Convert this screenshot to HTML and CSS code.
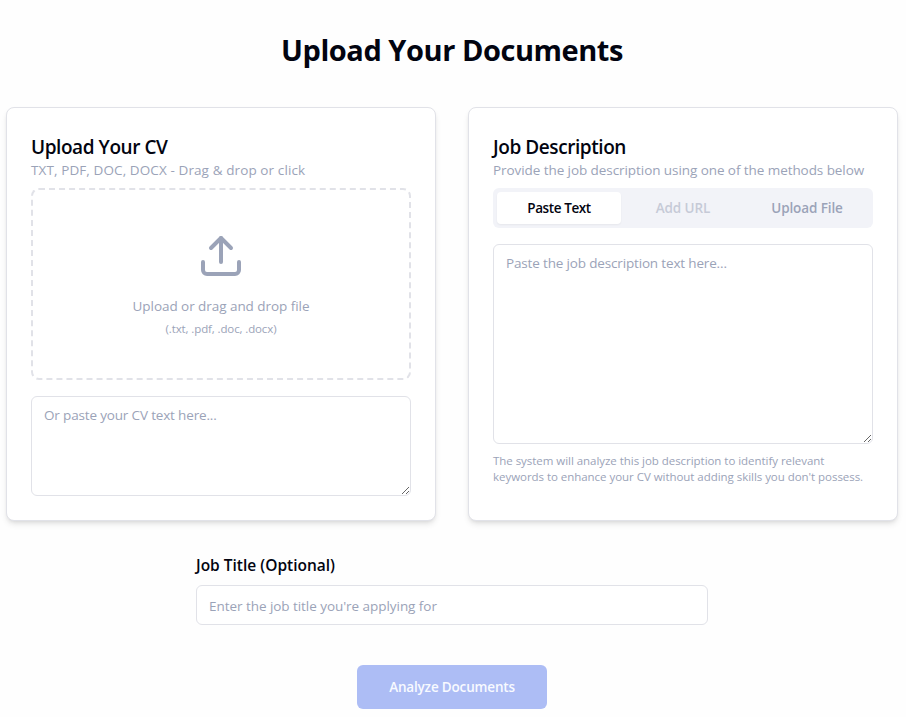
FILE: index.html
```html
<!DOCTYPE html>
<html lang="en">
<head>
<meta charset="utf-8">
<title>Upload Your Documents</title>
<link rel="stylesheet" href="styles.css">
</head>
<body>
<main class="page">
  <h1 class="page-title">Upload Your Documents</h1>
  <div class="cards">
    <section class="card">
      <h2 class="card-title">Upload Your CV</h2>
      <p class="card-note formats">TXT, PDF, DOC, DOCX - Drag &amp; drop or click</p>
      <div class="dropzone">
        <svg class="upload-icon" viewBox="0 0 24 24" fill="none" stroke="currentColor" stroke-width="2" stroke-linecap="round" stroke-linejoin="round"><path d="M21 15v4a2 2 0 0 1-2 2H5a2 2 0 0 1-2-2v-4"/><polyline points="17 8 12 3 7 8"/><line x1="12" x2="12" y1="3" y2="15"/></svg>
        <p class="drop-text">Upload or drag and drop file</p>
        <p class="drop-types">(.txt, .pdf, .doc, .docx)</p>
      </div>
      <textarea class="field area cv-area" placeholder="Or paste your CV text here..."></textarea>
    </section>
    <section class="card">
      <h2 class="card-title">Job Description</h2>
      <p class="card-note">Provide the job description using one of the methods below</p>
      <div class="tabs">
        <button class="tab active">Paste Text</button>
        <button class="tab muted">Add URL</button>
        <button class="tab">Upload File</button>
      </div>
      <textarea class="field area job-area" placeholder="Paste the job description text here..."></textarea>
      <p class="hint">The system will analyze this job description to identify relevant<br>keywords to enhance your CV without adding skills you don't possess.</p>
    </section>
  </div>
  <div class="job-title">
    <label class="label" for="job">Job Title (Optional)</label>
    <input class="field input" id="job" placeholder="Enter the job title you're applying for">
  </div>
  <button class="submit">Analyze Documents</button>
</main>
</body>
</html>
```
FILE: styles.css
```css
* { box-sizing: border-box; margin: 0; }
body {
  background: #fefefe;
  color: #020410;
  font-family: "Open Sans", "Noto Sans", sans-serif;
  font-size: 13.5px;
  line-height: 20px;
}
button, input, textarea { font: inherit; letter-spacing: inherit; }
.page { width: 892px; margin-left: 6px; padding-top: 32px; display: flex; flex-direction: column; align-items: center; }
.page-title { font-size: 29px; line-height: 36px; font-weight: 700; letter-spacing: -.45px; white-space: nowrap; }
.cards { width: 100%; margin-top: 39px; display: grid; grid-template-columns: 1fr 1fr; gap: 32px; }
.card {
  height: 414px;
  padding: 24px;
  background: #fff;
  border: 1px solid #e1e2e8;
  border-radius: 8px;
  box-shadow: 0 4px 6px -1px rgba(0,0,0,.1), 0 2px 4px -2px rgba(0,0,0,.1);
}
.card-title { padding-top: 2px; font-size: 19px; line-height: 26px; font-weight: 600; letter-spacing: -.43px; }
.card-note { color: #9ba3b8; line-height: 20px; margin-bottom: 8px; letter-spacing: -.07px; white-space: nowrap; }
.formats { letter-spacing: .1px; }
.dropzone {
  height: 192px;
  border: 2px dashed #e1e2e8;
  border-radius: 8px;
  display: flex; flex-direction: column; align-items: center;
  padding-top: 42px;
  color: #9ba3b8;
}
.upload-icon { width: 48px; height: 48px; }
.drop-text { margin-top: 16px; letter-spacing: -.05px; }
.drop-types { margin-top: 5px; font-size: 11.5px; line-height: 16px; letter-spacing: -.12px; }
.field { display: block; width: 100%; border: 1px solid #e1e2e8; border-radius: 6px; background: #fff; padding: 8px 12px; outline: 0; }
.field::placeholder { color: #9ba3b8; opacity: 1; }
.area { resize: vertical; letter-spacing: -.16px; }
.cv-area { height: 100px; margin-top: 16px; }
.tabs { height: 40px; padding: 4px; border-radius: 6px; background: #f2f3f8; display: grid; grid-template-columns: repeat(3, 1fr); }
.tab { border: 0; border-radius: 4px; background: none; color: #9ba3b8; font-weight: 600; padding: 0; letter-spacing: -.1px; }
.active { background: #fff; color: #020410; box-shadow: 0 1px 2px rgba(0,0,0,.05); letter-spacing: -.4px; }
.muted { opacity: .5; }
.job-area { height: 200px; margin-top: 16px; }
.hint { margin-top: 9px; color: #9ba3b8; font-size: 11.5px; line-height: 16px; letter-spacing: -.04px; white-space: nowrap; }
.job-title { width: 512px; margin-top: 32px; }
.label { display: block; font-size: 15.5px; line-height: 24px; font-weight: 600; letter-spacing: 0; margin-bottom: 8px; }
.input { height: 40px; padding-top: 9px; padding-bottom: 7px; letter-spacing: -.05px; }
.submit { width: 190px; height: 44px; margin-top: 40px; border: 0; border-radius: 6px; background: #adbdf5; color: #f8faff; font-weight: 600; letter-spacing: -.17px; }
```
